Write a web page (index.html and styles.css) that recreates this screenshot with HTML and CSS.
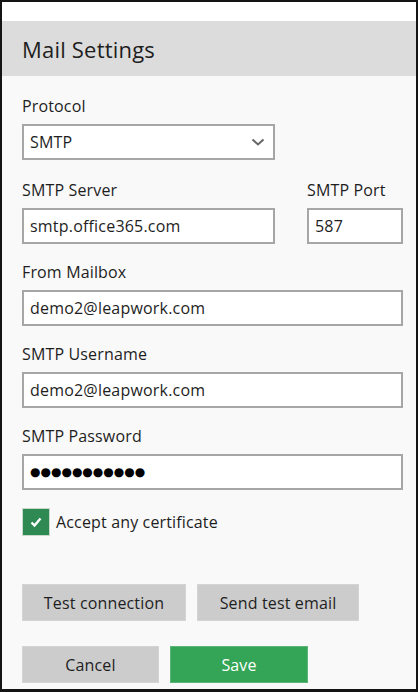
FILE: index.html
```html
<!DOCTYPE html>
<html>
<head>
<meta charset="utf-8">
<link rel="stylesheet" href="styles.css">
</head>
<body>
<div class="frame">
  <div class="topstrip"></div>
  <div class="header"><h1 class="title">Mail Settings</h1></div>
  <div class="content">
    <div class="field first">
      <div class="label">Protocol</div>
      <div class="select short">
        <span class="value">SMTP</span>
        <svg class="chev" width="14" height="8" viewBox="0 0 14 8"><polyline points="1.5,1.5 7,6.5 12.5,1.5" fill="none" stroke="#666" stroke-width="2"/></svg>
      </div>
    </div>
    <div class="row">
      <div class="field server">
        <div class="label">SMTP Server</div>
        <div class="input short">smtp.office365.com</div>
      </div>
      <div class="field port">
        <div class="label">SMTP Port</div>
        <div class="input">587</div>
      </div>
    </div>
    <div class="field">
      <div class="label">From Mailbox</div>
      <div class="input">demo2@leapwork.com</div>
    </div>
    <div class="field">
      <div class="label">SMTP Username</div>
      <div class="input">demo2@leapwork.com</div>
    </div>
    <div class="field">
      <div class="label">SMTP Password</div>
      <div class="input password">●●●●●●●●●●●</div>
    </div>
    <div class="check-row">
      <div class="checkbox">
        <svg width="14" height="12" viewBox="0 0 14 12"><polyline points="2.5,6.5 5.5,9.5 11.5,2.5" fill="none" stroke="#fff" stroke-width="2.4"/></svg>
      </div>
      <span class="check-label">Accept any certificate</span>
    </div>
    <div class="btn-row top">
      <button class="btn gray w164">Test connection</button>
      <button class="btn gray w162">Send test email</button>
    </div>
    <div class="btn-row bottom">
      <button class="btn gray w137">Cancel</button>
      <button class="btn green w138">Save</button>
    </div>
  </div>
</div>
</body>
</html>
```
FILE: styles.css
```css
html, body {
  margin: 0;
  padding: 0;
}
body {
  font-family: "Open Sans", "Noto Sans", sans-serif;
  color: #1e1e1e;
}
.frame {
  width: 418px;
  height: 692px;
  box-sizing: border-box;
  border: 2px solid #141414;
  border-bottom-width: 3px;
  background: #f9f9f9;
  display: flex;
  flex-direction: column;
}
.topstrip {
  height: 19px;
  background: #fff;
}
.header {
  height: 55px;
  background: #dcdcdc;
  display: flex;
  align-items: center;
  padding-left: 20px;
}
.title {
  margin: 0;
  font-weight: 400;
  font-size: 22px;
  color: #1e1e1e;
  letter-spacing: 0.2px;
}
.content {
  padding: 20px 13px 0 20px;
  display: flex;
  flex-direction: column;
}
.field {
  margin-top: 18px;
  display: flex;
  flex-direction: column;
}
.field.first {
  margin-top: 0;
}
.label {
  height: 20px;
  line-height: 21px;
  font-size: 16px;
  letter-spacing: 0.15px;
  margin-bottom: 8px;
}
.row {
  display: flex;
  justify-content: space-between;
  margin-top: 2px;
}
.row .field.server {
  width: 253px;
}
.row .field.port {
  width: 96px;
}
.input, .select {
  height: 36px;
  box-sizing: border-box;
  border: 2px solid #a6a6a6;
  background: #fff;
  font-size: 16px;
  letter-spacing: 0.2px;
  line-height: 32px;
  padding-left: 6px;
  white-space: nowrap;
}
.short {
  width: 253px;
}
.select {
  display: flex;
  align-items: center;
  justify-content: space-between;
  padding-right: 8px;
}
.chev {
  display: block;
}
.password {
  font-family: "DejaVu Sans", sans-serif;
  font-size: 12px;
  letter-spacing: 0;
  color: #000;
}
.check-row {
  margin-top: 18px;
  display: flex;
  align-items: center;
  height: 28px;
}
.checkbox {
  width: 28px;
  height: 28px;
  box-sizing: border-box;
  background: #2e8a52;
  border: 1px solid #c9d9cd;
  display: flex;
  align-items: center;
  justify-content: center;
}
.checkbox svg {
  display: block;
}
.check-label {
  margin-left: 6px;
  font-size: 16px;
  letter-spacing: 0.15px;
}
.btn-row {
  display: flex;
  gap: 11px;
}
.btn-row.top {
  margin-top: 48px;
}
.btn-row.bottom {
  margin-top: 25px;
}
.btn {
  height: 37px;
  border: none;
  font-family: "Open Sans", "Noto Sans", sans-serif;
  font-size: 16px;
  letter-spacing: 0.15px;
  padding: 0;
  margin: 0;
  color: #1e1e1e;
}
.gray {
  background: #cccccc;
  border: 1px solid #d4d4d4;
}
.green {
  background: #34a556;
  border: 1px solid #5bb576;
  color: #fff;
}
.w164 { width: 164px; }
.w162 { width: 162px; }
.w137 { width: 137px; }
.w138 { width: 138px; }
```
